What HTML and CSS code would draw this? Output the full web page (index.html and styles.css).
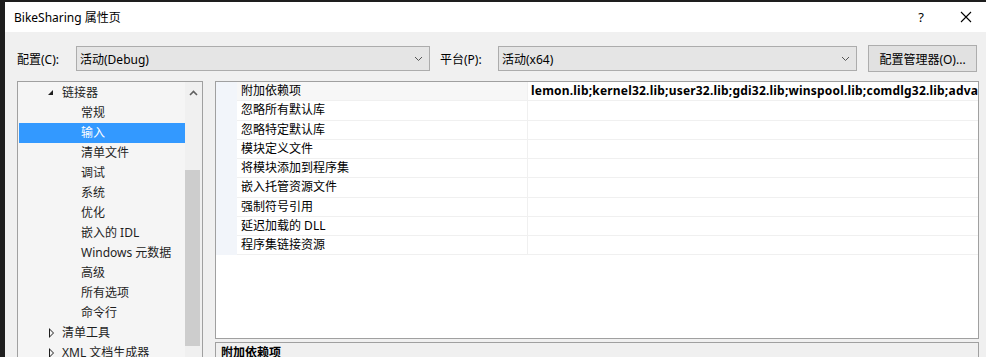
FILE: index.html
```html
<!DOCTYPE html>
<html lang="zh-CN">
<head>
  <meta charset="UTF-8">
  <title>BikeSharing 属性页</title>
  <link rel="stylesheet" href="styles.css">
</head>
<body>
  <div class="dialog">
    <div class="titlebar">
      <span class="title">BikeSharing 属性页</span>
      <span class="help">?</span>
      <svg class="close" width="12" height="12" viewBox="0 0 12 12">
        <path d="M1 1 L11 11 M11 1 L1 11" stroke="#000" stroke-width="1.1" fill="none"/>
      </svg>
    </div>

    <div class="toolbar">
      <label class="lbl cfg-lbl">配置(C):</label>
      <div class="select cfg-select">
        <span>活动(Debug)</span>
        <svg class="chev" width="9" height="6" viewBox="0 0 9 6"><path d="M1 1 L4.5 4.5 L8 1" stroke="#555" fill="none"/></svg>
      </div>
      <label class="lbl plat-lbl">平台(P):</label>
      <div class="select plat-select">
        <span>活动(x64)</span>
        <svg class="chev" width="9" height="6" viewBox="0 0 9 6"><path d="M1 1 L4.5 4.5 L8 1" stroke="#555" fill="none"/></svg>
      </div>
      <button class="btn">配置管理器(O)...</button>
    </div>

    <div class="main">
      <div class="tree">
        <ul class="tree-list">
          <li class="lvl1"><span class="tri open"></span>链接器</li>
          <li class="lvl2">常规</li>
          <li class="lvl2 selected">输入</li>
          <li class="lvl2">清单文件</li>
          <li class="lvl2">调试</li>
          <li class="lvl2">系统</li>
          <li class="lvl2">优化</li>
          <li class="lvl2">嵌入的 IDL</li>
          <li class="lvl2">Windows 元数据</li>
          <li class="lvl2">高级</li>
          <li class="lvl2">所有选项</li>
          <li class="lvl2">命令行</li>
          <li class="lvl1"><span class="tri closed"></span>清单工具</li>
          <li class="lvl1"><span class="tri closed"></span>XML 文档生成器</li>
        </ul>
        <div class="scrollbar">
          <svg class="up" width="9" height="6" viewBox="0 0 9 6"><path d="M1 5 L4.5 1.5 L8 5" stroke="#606060" stroke-width="1.6" fill="none"/></svg>
          <div class="thumb"></div>
        </div>
      </div>

      <div class="right">
        <div class="grid">
          <div class="row active">
            <div class="margin"></div>
            <div class="name">附加依赖项</div>
            <div class="value">lemon.lib;kernel32.lib;user32.lib;gdi32.lib;winspool.lib;comdlg32.lib;advapi32.lib;shell32.lib;ole32.lib</div>
          </div>
          <div class="row"><div class="margin"></div><div class="name">忽略所有默认库</div><div class="value"></div></div>
          <div class="row"><div class="margin"></div><div class="name">忽略特定默认库</div><div class="value"></div></div>
          <div class="row"><div class="margin"></div><div class="name">模块定义文件</div><div class="value"></div></div>
          <div class="row"><div class="margin"></div><div class="name">将模块添加到程序集</div><div class="value"></div></div>
          <div class="row"><div class="margin"></div><div class="name">嵌入托管资源文件</div><div class="value"></div></div>
          <div class="row"><div class="margin"></div><div class="name">强制符号引用</div><div class="value"></div></div>
          <div class="row"><div class="margin"></div><div class="name">延迟加载的 DLL</div><div class="value"></div></div>
          <div class="row"><div class="margin"></div><div class="name">程序集链接资源</div><div class="value"></div></div>
        </div>
        <div class="desc">附加依赖项</div>
      </div>
    </div>
  </div>
</body>
</html>
```

FILE: styles.css
```css
* { box-sizing: border-box; margin: 0; padding: 0; }
html, body { height: 100%; }
body {
  background: #1e1e1e;
  overflow: hidden;
  font-family: "Noto Sans", "Noto Sans CJK SC", sans-serif;
  font-size: 12px;
  color: #000;
}
.dialog {
  margin: 2px 0 0 5px;
  width: 981px;
  height: 355px;
  background: #f0f0f0;
  overflow: hidden;
}

/* title bar */
.titlebar {
  height: 30px;
  background: #fff;
  display: flex;
  align-items: center;
  padding-left: 9px;
}
.title { font-size: 12px; }
.help {
  margin-left: auto;
  font-size: 13px;
  margin-right: 36px;
}
.close { margin-right: 14px; }

/* config row */
.toolbar {
  display: flex;
  align-items: center;
  height: 27px;
  margin-top: 13px;
  padding-left: 12px;
}
.lbl { display: block; }
.cfg-lbl { width: 59px; }
.plat-lbl { width: 58px; margin-left: 10px; }
.select {
  height: 25px;
  background: #e5e5e5;
  border: 1px solid #acacac;
  display: flex;
  align-items: center;
  padding: 0 6px 0 3px;
}
.select span { flex: 1; }
.cfg-select { width: 354px; }
.plat-select { width: 359px; }
.btn {
  margin-left: 11px;
  width: 109px;
  height: 27px;
  background: #e1e1e1;
  border: 1px solid #adadad;
  font-family: inherit;
  font-size: 12px;
  color: #000;
}

/* main area */
.main {
  display: flex;
  gap: 12px;
  margin-top: 9px;
  padding-left: 12px;
}

.tree {
  width: 186px;
  height: 290px;
  border: 1px solid #a0a0a0;
  background: #f5f5f5;
  display: flex;
}
.tree-list {
  list-style: none;
  width: 167px;
  padding-top: 1px;
}
.tree-list li {
  height: 20px;
  line-height: 20px;
  margin-left: 1px;
  white-space: nowrap;
  position: relative;
  color: #1e1e1e;
}
.lvl1 { padding-left: 43px; }
.lvl2 { padding-left: 62px; }
.tree-list li.selected { background: #3399ff; color: #fff; }
.tri {
  position: absolute;
  left: 29px;
  top: 7px;
  width: 0;
  height: 0;
}
.tri.open {
  border-left: 5px solid transparent;
  border-bottom: 5px solid #1e1e1e;
}
.tri.closed {
  left: 30px;
  top: 5px;
  width: 6px;
  height: 10px;
  background: none;
}
.tri.closed::before {
  content: "";
  position: absolute;
  left: 0;
  top: 0;
  border-top: 5px solid transparent;
  border-bottom: 5px solid transparent;
  border-left: 5px solid #1e1e1e;
}
.tri.closed::after {
  content: "";
  position: absolute;
  left: 1px;
  top: 2px;
  border-top: 3px solid transparent;
  border-bottom: 3px solid transparent;
  border-left: 3px solid #f5f5f5;
}

.scrollbar {
  width: 17px;
  background: #f0f0f0;
  display: flex;
  flex-direction: column;
  align-items: flex-start;
}
.up { margin: 8px 0 0 4px; }
.thumb {
  margin-top: 74px;
  width: 15px;
  height: 176px;
  background: #cdcdcd;
}

.right {
  width: 764px;
  display: flex;
  flex-direction: column;
}
.grid {
  height: 258px;
  border: 1px solid #a0a0a0;
  background: #fff;
}
.row {
  display: flex;
  height: 19.25px;
}
.row .margin {
  width: 21px;
  background: #f2f5fa;
}
.row .name {
  width: 291px;
  padding-left: 4px;
  border-right: 1px solid #f0f0f0;
  border-bottom: 1px solid #f0f0f0;
  line-height: 18px;
  white-space: nowrap;
}
.row .value {
  flex: 1;
  padding-left: 3px;
  border-bottom: 1px solid #f0f0f0;
  line-height: 18px;
  font-weight: bold;
  letter-spacing: 0.2px;
  white-space: nowrap;
  overflow: hidden;
}
.row.active .name { background: #f7f7f7; }

.desc {
  margin-top: 3px;
  height: 40px;
  border: 1px solid #a0a0a0;
  background: #f0f0f0;
  padding: 2px 0 0 5px;
  line-height: 16px;
  font-weight: bold;
}
```
